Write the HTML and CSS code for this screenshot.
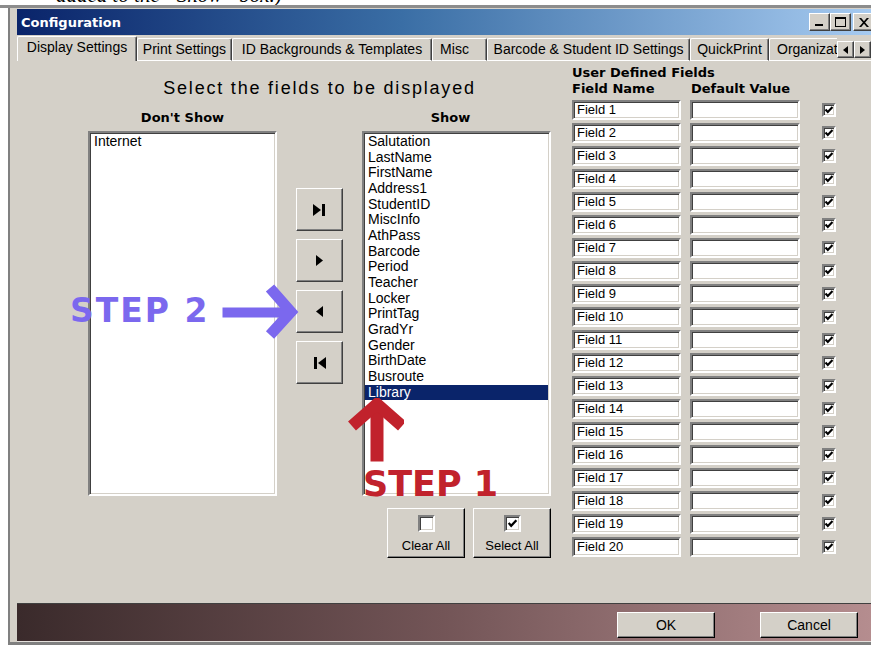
FILE: index.html
```html
<!DOCTYPE html>
<html lang="en">
<head>
<meta charset="utf-8">
<title>Configuration</title>
<link rel="stylesheet" href="styles.css">
</head>
<body>
<div class="doc-text"><p>added to the “Show” box.)</p></div>
<div class="rule"></div>

<div class="window">
  <div class="titlebar">
    <span class="title">Configuration</span>
    <div class="caption">
      <span class="cbtn"><svg width="9" height="10" viewBox="0 0 9 10"><rect x="0" y="7" width="8" height="2"/></svg></span>
      <span class="cbtn"><svg width="11" height="10" viewBox="0 0 11 10"><path d="M0 0h11v10H0z M1 2v7h9V2z" fill-rule="evenodd"/></svg></span>
      <span class="cbtn close"><svg width="10" height="9" viewBox="0 0 10 9"><path d="M0 0h2.2l2.8 3.3L7.8 0H10L6.1 4.5 10 9H7.8L5 5.7 2.2 9H0l3.9-4.5z"/></svg></span>
    </div>
  </div>

  <div class="tabs">
    <div class="tab active t-display">Display Settings</div>
    <div class="tab t-print">Print Settings</div>
    <div class="tab t-bg">ID Backgrounds &amp; Templates</div>
    <div class="tab t-misc">Misc</div>
    <div class="tab t-barcode">Barcode &amp; Student ID Settings</div>
    <div class="tab t-quick">QuickPrint</div>
    <div class="tab t-org">Organization</div>
    <div class="tab-scroll">
      <span class="sbtn"><svg width="5" height="8" viewBox="0 0 5 8"><path d="M5 0v8L0 4z"/></svg></span>
      <span class="sbtn"><svg width="5" height="8" viewBox="0 0 5 8"><path d="M0 0v8l5-4z"/></svg></span>
    </div>
  </div>

  <div class="page">
    <section class="chooser">
      <h2>Select the fields to be displayed</h2>
      <div class="cols">
        <div class="col">
          <h3>Don't Show</h3>
          <div class="listbox">
            <div class="item">Internet</div>
          </div>
        </div>

        <div class="movers">
          <button class="mbtn" type="button"><svg width="13" height="12" viewBox="0 0 13 12"><path d="M0 0l8 6-8 6z"/><rect x="9" y="0" width="3" height="12"/></svg></button>
          <button class="mbtn" type="button"><svg width="7" height="11" viewBox="0 0 7 11"><path d="M0 0l7 5.5L0 11z"/></svg></button>
          <button class="mbtn" type="button"><svg width="7" height="11" viewBox="0 0 7 11"><path d="M7 0L0 5.5 7 11z"/></svg></button>
          <button class="mbtn" type="button"><svg width="13" height="12" viewBox="0 0 13 12"><rect x="1" y="0" width="3" height="12"/><path d="M13 0L5 6l8 6z"/></svg></button>
        </div>

        <div class="col">
          <h3 class="show-head">Show</h3>
          <div class="listbox">
            <div class="item">Salutation</div>
            <div class="item">LastName</div>
            <div class="item">FirstName</div>
            <div class="item">Address1</div>
            <div class="item">StudentID</div>
            <div class="item">MiscInfo</div>
            <div class="item">AthPass</div>
            <div class="item">Barcode</div>
            <div class="item">Period</div>
            <div class="item">Teacher</div>
            <div class="item">Locker</div>
            <div class="item">PrintTag</div>
            <div class="item">GradYr</div>
            <div class="item">Gender</div>
            <div class="item">BirthDate</div>
            <div class="item">Busroute</div>
            <div class="item sel">Library</div>
          </div>
          <div class="bulk">
            <button class="bbtn" type="button"><span class="chk big"></span><span>Clear All</span></button>
            <button class="bbtn" type="button"><span class="chk big on"><svg viewBox="0 0 10 10"><polyline points="1.5,4.5 3.8,7 8.5,2"/></svg></span><span>Select All</span></button>
          </div>
        </div>
      </div>
    </section>

    <section class="udf">
      <h3>User Defined Fields</h3>
      <div class="heads"><h3>Field Name</h3><h3>Default Value</h3></div>
      <div class="rows">
        <div class="row"><span class="fld">Field 1</span><span class="fld val"></span><span class="chk on"><svg viewBox="0 0 10 10"><polyline points="1.5,4.5 3.8,7 8.5,2"/></svg></span></div>
        <div class="row"><span class="fld">Field 2</span><span class="fld val"></span><span class="chk on"><svg viewBox="0 0 10 10"><polyline points="1.5,4.5 3.8,7 8.5,2"/></svg></span></div>
        <div class="row"><span class="fld">Field 3</span><span class="fld val"></span><span class="chk on"><svg viewBox="0 0 10 10"><polyline points="1.5,4.5 3.8,7 8.5,2"/></svg></span></div>
        <div class="row"><span class="fld">Field 4</span><span class="fld val"></span><span class="chk on"><svg viewBox="0 0 10 10"><polyline points="1.5,4.5 3.8,7 8.5,2"/></svg></span></div>
        <div class="row"><span class="fld">Field 5</span><span class="fld val"></span><span class="chk on"><svg viewBox="0 0 10 10"><polyline points="1.5,4.5 3.8,7 8.5,2"/></svg></span></div>
        <div class="row"><span class="fld">Field 6</span><span class="fld val"></span><span class="chk on"><svg viewBox="0 0 10 10"><polyline points="1.5,4.5 3.8,7 8.5,2"/></svg></span></div>
        <div class="row"><span class="fld">Field 7</span><span class="fld val"></span><span class="chk on"><svg viewBox="0 0 10 10"><polyline points="1.5,4.5 3.8,7 8.5,2"/></svg></span></div>
        <div class="row"><span class="fld">Field 8</span><span class="fld val"></span><span class="chk on"><svg viewBox="0 0 10 10"><polyline points="1.5,4.5 3.8,7 8.5,2"/></svg></span></div>
        <div class="row"><span class="fld">Field 9</span><span class="fld val"></span><span class="chk on"><svg viewBox="0 0 10 10"><polyline points="1.5,4.5 3.8,7 8.5,2"/></svg></span></div>
        <div class="row"><span class="fld">Field 10</span><span class="fld val"></span><span class="chk on"><svg viewBox="0 0 10 10"><polyline points="1.5,4.5 3.8,7 8.5,2"/></svg></span></div>
        <div class="row"><span class="fld">Field 11</span><span class="fld val"></span><span class="chk on"><svg viewBox="0 0 10 10"><polyline points="1.5,4.5 3.8,7 8.5,2"/></svg></span></div>
        <div class="row"><span class="fld">Field 12</span><span class="fld val"></span><span class="chk on"><svg viewBox="0 0 10 10"><polyline points="1.5,4.5 3.8,7 8.5,2"/></svg></span></div>
        <div class="row"><span class="fld">Field 13</span><span class="fld val"></span><span class="chk on"><svg viewBox="0 0 10 10"><polyline points="1.5,4.5 3.8,7 8.5,2"/></svg></span></div>
        <div class="row"><span class="fld">Field 14</span><span class="fld val"></span><span class="chk on"><svg viewBox="0 0 10 10"><polyline points="1.5,4.5 3.8,7 8.5,2"/></svg></span></div>
        <div class="row"><span class="fld">Field 15</span><span class="fld val"></span><span class="chk on"><svg viewBox="0 0 10 10"><polyline points="1.5,4.5 3.8,7 8.5,2"/></svg></span></div>
        <div class="row"><span class="fld">Field 16</span><span class="fld val"></span><span class="chk on"><svg viewBox="0 0 10 10"><polyline points="1.5,4.5 3.8,7 8.5,2"/></svg></span></div>
        <div class="row"><span class="fld">Field 17</span><span class="fld val"></span><span class="chk on"><svg viewBox="0 0 10 10"><polyline points="1.5,4.5 3.8,7 8.5,2"/></svg></span></div>
        <div class="row"><span class="fld">Field 18</span><span class="fld val"></span><span class="chk on"><svg viewBox="0 0 10 10"><polyline points="1.5,4.5 3.8,7 8.5,2"/></svg></span></div>
        <div class="row"><span class="fld">Field 19</span><span class="fld val"></span><span class="chk on"><svg viewBox="0 0 10 10"><polyline points="1.5,4.5 3.8,7 8.5,2"/></svg></span></div>
        <div class="row"><span class="fld">Field 20</span><span class="fld val"></span><span class="chk on"><svg viewBox="0 0 10 10"><polyline points="1.5,4.5 3.8,7 8.5,2"/></svg></span></div>
      </div>
    </section>

    <!-- callouts drawn over the dialog -->
    <div class="callout step2">STEP 2</div>
    <svg class="arrow arrow-right" width="80" height="58" viewBox="0 0 80 58">
      <rect x="3" y="26" width="62" height="9"/>
      <polyline points="50,6 71,30 50,53" fill="none" stroke-width="11"/>
    </svg>
    <svg class="arrow arrow-up" width="58" height="66" viewBox="0 0 58 66">
      <rect x="25" y="12" width="12" height="51"/>
      <polyline points="6,28 31,6 56,28" fill="none" stroke-width="12"/>
    </svg>
    <div class="callout step1">STEP 1</div>
  </div>

  <div class="footer">
    <button class="fbtn" type="button">OK</button>
    <button class="fbtn" type="button">Cancel</button>
  </div>
</div>
</body>
</html>
```

FILE: styles.css
```css
* { box-sizing: border-box; }

html, body { margin: 0; padding: 0; }

body {
  width: 871px;
  height: 645px;
  overflow: hidden;
  background: #fff;
  color: #000;
  font-family: "Liberation Sans", Arial, sans-serif;
  font-size: 14px;
}

/* tail of the surrounding document text, cut by the window */
.doc-text { height: 5px; overflow: hidden; }
.doc-text p {
  margin: -15px 0 0 56px;
  font: italic 21px/20px "Liberation Serif", serif;
  white-space: nowrap;
}
.rule { height: 3px; background: #8c8c8c; }

/* ---------- window frame ---------- */
.window {
  margin-left: 8px;
  border-left: 2px solid #808080;
  border-bottom: 3px solid #808080;
  padding: 1px 0 0 7px;
  background: #d4d0c8;
}

.titlebar {
  height: 26px;
  display: flex;
  align-items: center;
  padding-left: 4px;
  overflow: hidden;
  background: linear-gradient(90deg, #0a246a 0%, #3a6ea5 45%, #a6caf0 100%);
}
.title {
  flex: 1;
  color: #fff;
  font: bold 13px "DejaVu Sans", sans-serif;
}
.caption { display: flex; margin-right: -3px; }
.cbtn {
  width: 21px;
  height: 18px;
  display: flex;
  align-items: center;
  justify-content: center;
  background: #d4d0c8;
  border: 1px solid;
  border-color: #fff #404040 #404040 #fff;
  box-shadow: inset -1px -1px #808080;
}
.cbtn.close { margin-left: 2px; }

/* ---------- tab strip ---------- */
.tabs {
  height: 26px;
  display: flex;
  align-items: flex-end;
}
.tab {
  height: 23px;
  display: flex;
  align-items: center;
  justify-content: center;
  white-space: nowrap;
  border: 1px solid;
  border-color: #fff #404040 #fff #fff;
  border-radius: 2px 2px 0 0;
  box-shadow: inset -1px 0 #808080;
  padding-bottom: 1px;
}
.tab.active {
  height: 25px;
  border-bottom: 0;
  padding-bottom: 4px;
}
.t-display { width: 120px; }
.t-print { width: 95px; }
.t-bg { width: 200px; }
.t-misc { width: 55px; padding-right: 10px; }
.t-barcode { width: 203px; }
.t-quick { width: 79px; }
.t-org {
  flex: 1;
  min-width: 0;
  overflow: hidden;
  justify-content: flex-start;
  padding-left: 7px;
  border-right: 0;
  box-shadow: none;
  border-radius: 2px 0 0 0;
}
.tab-scroll {
  height: 23px;
  display: flex;
  align-items: flex-start;
  padding-top: 3px;
  border-bottom: 1px solid #fff;
}
.sbtn {
  width: 17px;
  height: 17px;
  display: flex;
  align-items: center;
  justify-content: center;
  border: 1px solid;
  border-color: #fff #404040 #404040 #fff;
  box-shadow: inset -1px -1px #808080;
}

/* ---------- display settings page ---------- */
.page {
  position: relative;
  height: 542px;
  display: flex;
  padding-left: 71px;
}

.chooser { width: 463px; }
.chooser h2 {
  margin: 17px 0 0;
  font-size: 18px;
  line-height: 20px;
  font-weight: normal;
  letter-spacing: 1.8px;
  text-align: center;
}

.cols { display: flex; gap: 19px; margin-top: 12px; }
.col { width: 189px; }
h3 {
  margin: 0;
  font: bold 13px/16px "DejaVu Sans", sans-serif;
}
.col h3 { margin-bottom: 5px; text-align: center; }
.col h3.show-head { padding-right: 12px; }

.listbox, .fld, .chk {
  background: #fff;
  border: 2px solid;
  border-color: #808080 #fff #fff #808080;
  box-shadow: inset 1px 1px #404040, inset -1px -1px #d4d0c8;
}
.listbox {
  height: 365px;
  padding: 1px 1px 0 1px;
}
.item {
  line-height: 15.65px;
  padding-left: 3px;
  white-space: nowrap;
}
.item.sel { background: #0a246a; color: #fff; }

button {
  font: inherit;
  color: #000;
  margin: 0;
  padding: 0;
  background: #d4d0c8;
}

.movers {
  width: 47px;
  padding-top: 78px;
  display: flex;
  flex-direction: column;
  gap: 8px;
}
.mbtn {
  height: 43px;
  display: flex;
  align-items: center;
  justify-content: center;
  border: 1px solid;
  border-color: #fff #404040 #404040 #fff;
  box-shadow: inset -1px -1px #808080;
}

.bulk {
  display: flex;
  justify-content: flex-end;
  gap: 8px;
  margin-top: 12px;
}
.bbtn {
  width: 78px;
  height: 50px;
  display: flex;
  flex-direction: column;
  align-items: center;
  padding-top: 6px;
  gap: 6px;
  font-size: 13px;
  line-height: 16px;
  border: 1px solid;
  border-color: #fff #000 #000 #fff;
  box-shadow: inset -1px -1px #808080;
}

.chk {
  width: 14px;
  height: 14px;
  display: block;
  padding: 0;
}
.chk svg {
  display: block;
  width: 10px;
  height: 10px;
}
.chk polyline { fill: none; stroke: #000; stroke-width: 2.1; }
.chk.big { width: 17px; height: 17px; padding: 1px; }
.chk.big svg { width: 11px; height: 11px; }

/* user defined fields */
.udf { margin-left: 21px; padding-top: 4px; }
.heads { display: flex; }
.heads h3:first-child { width: 119px; }
.rows {
  margin-top: 3px;
  display: flex;
  flex-direction: column;
  gap: 3px;
}
.row { display: flex; align-items: center; height: 20px; }
.fld {
  width: 109px;
  height: 20px;
  padding-left: 3px;
  font-size: 13px;
  line-height: 16px;
  white-space: nowrap;
}
.fld.val { width: 110px; margin-left: 9px; }
.row .chk { margin-left: 22px; }

/* callouts */
.callout {
  position: absolute;
  font-family: "DejaVu Sans", sans-serif;
  font-weight: bold;
  white-space: nowrap;
}
.step2 {
  left: 53px;
  top: 233px;
  font-size: 33px;
  line-height: 33px;
  letter-spacing: 2px;
  color: #7b68ee;
}
.step1 {
  left: 346px;
  top: 406px;
  font-size: 35px;
  line-height: 35px;
  color: #c1222c;
}
.arrow { position: absolute; }
.arrow-right { left: 203px; top: 221px; fill: #7b68ee; stroke: #7b68ee; }
.arrow-up { left: 329px; top: 337px; fill: #c1222c; stroke: #c1222c; }

/* ---------- button bar ---------- */
.footer {
  height: 39px;
  display: flex;
  justify-content: flex-end;
  align-items: flex-start;
  gap: 45px;
  padding: 8px 13px 0 0;
  border-top: 1px solid #404040;
  border-bottom: 1px solid #e4e0dc;
  background: linear-gradient(90deg, #3a2a2b 0%, #735557 50%, #b58d8f 100%);
}
.fbtn {
  width: 98px;
  height: 26px;
  font-size: 14px;
  border: 1px solid;
  border-color: #fff #000 #000 #fff;
  box-shadow: inset -1px -1px #808080;
}
```
